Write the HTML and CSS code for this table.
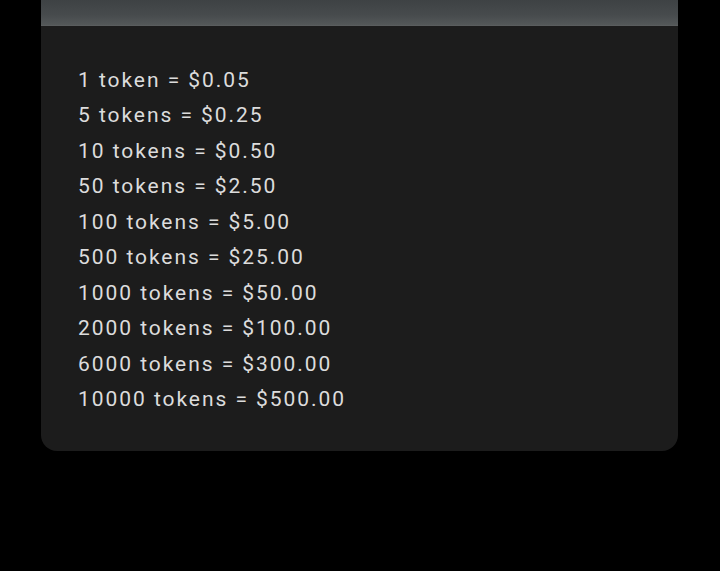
FILE: index.html
```html
<!DOCTYPE html>
<html>
<head>
<meta charset="utf-8">
<link rel="stylesheet" href="styles.css">
</head>
<body>
<div class="card">
  <div class="banner"></div>
  <ul class="prices">
    <li>1 token = $0.05</li>
    <li>5 tokens = $0.25</li>
    <li>10 tokens = $0.50</li>
    <li>50 tokens = $2.50</li>
    <li>100 tokens = $5.00</li>
    <li>500 tokens = $25.00</li>
    <li>1000 tokens = $50.00</li>
    <li>2000 tokens = $100.00</li>
    <li>6000 tokens = $300.00</li>
    <li>10000 tokens = $500.00</li>
  </ul>
</div>
</body>
</html>
```
FILE: styles.css
```css
html, body {
  margin: 0;
  padding: 0;
  background: #000;
  height: 100%;
}
.card {
  margin-left: 41px;
  width: 637px;
  background: #1c1c1c;
  border-radius: 0 0 16px 16px;
  overflow: hidden;
}
.banner {
  height: 25px;
  background: linear-gradient(180deg, #3e4244 0%, #474b4d 60%, #545859 100%);
  border-bottom: 1px solid #5a5d5e;
}
.prices {
  list-style: none;
  margin: 0;
  padding: 37px 37px 33px 37px;
  font-family: Roboto, "Noto Sans", sans-serif;
  font-size: 21px;
  line-height: 35.45px;
  color: #dcdcdc;
  letter-spacing: 1.95px;
}
```
